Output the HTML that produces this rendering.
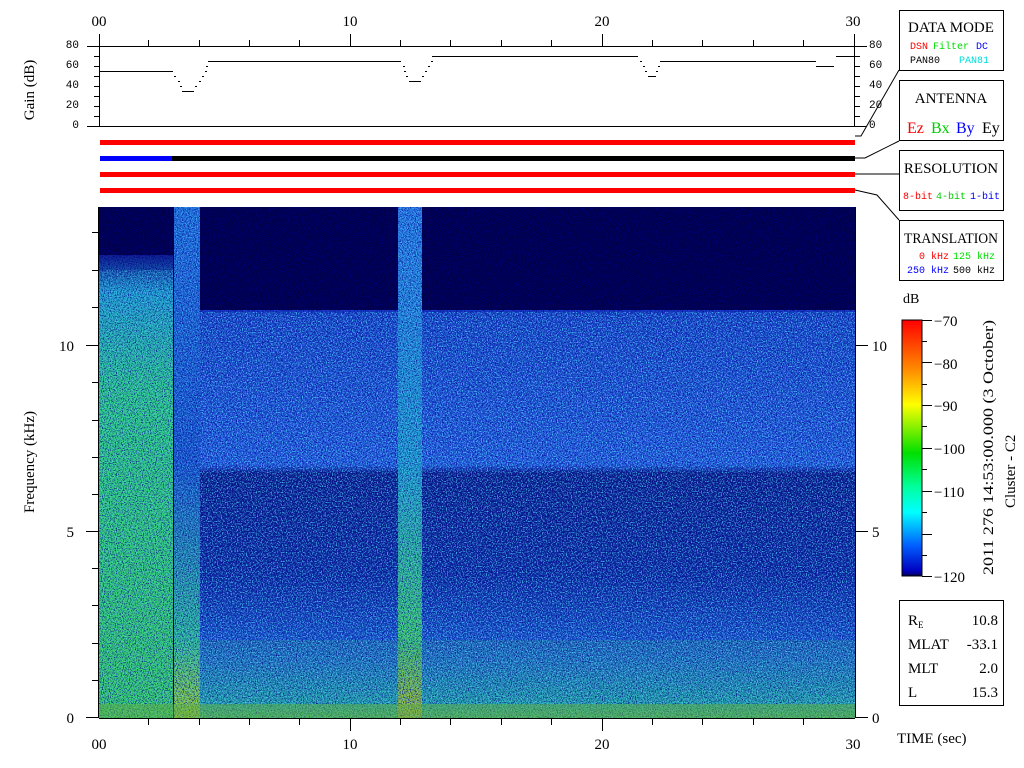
<!DOCTYPE html>
<html><head><meta charset="utf-8"><style>
html,body{margin:0;padding:0;background:#fff;width:1024px;height:768px;overflow:hidden}
text{font-family:"Liberation Serif",serif}
.m text{font-family:"Liberation Mono",monospace}
</style></head><body>
<svg width="1024" height="768" viewBox="0 0 1024 768" xmlns="http://www.w3.org/2000/svg">
<defs>
<linearGradient id="blue" x1="0" y1="0" x2="0" y2="1">
<stop offset="0" stop-color="#1840c8"/><stop offset="0.38" stop-color="#2458e0"/>
<stop offset="0.4" stop-color="#0a1888"/><stop offset="0.65" stop-color="#0c24a0"/>
<stop offset="0.85" stop-color="#1c5cd8"/><stop offset="0.97" stop-color="#20a8b0"/><stop offset="1" stop-color="#40c060"/>
</linearGradient>
<linearGradient id="left" x1="0" y1="0" x2="0" y2="1">
<stop offset="0" stop-color="#102090"/><stop offset="0.08" stop-color="#20a0d0"/>
<stop offset="0.3" stop-color="#30d080"/><stop offset="1" stop-color="#38d060"/>
</linearGradient>
<linearGradient id="band1" x1="0" y1="0" x2="0" y2="1">
<stop offset="0" stop-color="#2070e0"/><stop offset="0.5" stop-color="#1850d0"/><stop offset="0.85" stop-color="#30c090"/><stop offset="1" stop-color="#a0d020"/>
</linearGradient>
<linearGradient id="band2" x1="0" y1="0" x2="0" y2="1">
<stop offset="0" stop-color="#2878e8"/><stop offset="0.5" stop-color="#20a0d0"/><stop offset="0.85" stop-color="#40d060"/><stop offset="1" stop-color="#e0c000"/>
</linearGradient>
<linearGradient id="cb" x1="0" y1="0" x2="0" y2="1">
<stop offset="0" stop-color="#ff0000"/><stop offset="0.2" stop-color="#ff9000"/><stop offset="0.33" stop-color="#ffff00"/>
<stop offset="0.52" stop-color="#00e000"/><stop offset="0.65" stop-color="#00ff9a"/><stop offset="0.75" stop-color="#00ffff"/>
<stop offset="0.88" stop-color="#0060ff"/><stop offset="0.98" stop-color="#0000c0"/><stop offset="1" stop-color="#000050"/>
</linearGradient>
<filter id="noise" x="0" y="0" width="100%" height="100%">
<feTurbulence type="fractalNoise" baseFrequency="0.8" numOctaves="1" seed="3"/>
<feColorMatrix values="0 0 0 0 0.1  0 0 0 0 0.8  0 0 0 0 1  0 0 0 4 -1.9"/>
</filter>
<filter id="noise2" x="0" y="0" width="100%" height="100%">
<feTurbulence type="fractalNoise" baseFrequency="0.85" numOctaves="1" seed="9"/>
<feColorMatrix values="0 0 0 0 0  0 0 0 0 0  0 0 0 0 0.25  0 0 0 4 -1.8"/>
</filter>
</defs>

<g font-size="15" text-anchor="middle">
<text x="99" y="26">00</text><text x="350" y="26">10</text><text x="602" y="26">20</text><text x="853" y="26">30</text>
</g>
<g stroke="#000" stroke-width="1" fill="none">
<line x1="99" y1="46.5" x2="855" y2="46.5"/><line x1="87" y1="126.5" x2="867" y2="126.5"/>
<line x1="99.5" y1="34" x2="99.5" y2="126"/><line x1="854.5" y1="34" x2="854.5" y2="126"/>
<line x1="87" y1="46.5" x2="99" y2="46.5"/><line x1="855" y1="46.5" x2="867" y2="46.5"/>
<path d="M148.5 40v6M199.5 40v6M249.5 40v6M299.5 40v6M350.5 34v12M400.5 40v6M450.5 40v6M501.5 40v6M551.5 40v6M602.5 34v12M652.5 40v6M702.5 40v6M753.5 40v6M803.5 40v6"/>
<path d="M94 56.5h5M94 66.5h5M94 76.5h5M94 86.5h5M94 96.5h5M94 106.5h5M94 116.5h5M855 56.5h5M855 66.5h5M855 76.5h5M855 86.5h5M855 96.5h5M855 106.5h5M855 116.5h5"/>
<path d="M100 71.5H173 M182 91.5H194 M208 61.5H401 M409 81.5H421 M432 56.5H638 M648 76.5H656 M660 61.5H816 M816 66.5H834 M836 56.5H855"/>
<path d="M174 76.5h2M178 81.5h2M180 86.5h2M195 86.5h2M199 81.5h2M202 76.5h2M205 71.5h2M206 66.5h2M403 66.5h2M404 71.5h2M406 76.5h2M422 76.5h2M425 71.5h2M428 66.5h2M431 61.5h2M640 61.5h2M643 66.5h2M645 71.5h2M656 71.5h2M658 66.5h2"/>
</g>
<g class="m" font-size="11" text-anchor="end">
<text x="79" y="48">80</text><text x="79" y="68">60</text><text x="79" y="88">40</text><text x="79" y="108">20</text><text x="79" y="128">0</text>
</g>
<g class="m" font-size="11">
<text x="869" y="48">80</text><text x="869" y="68">60</text><text x="869" y="88">40</text><text x="869" y="108">20</text><text x="869" y="128">0</text>
</g>
<text transform="translate(34,90) rotate(-90)" font-size="15" text-anchor="middle">Gain (dB)</text>

<rect x="100" y="140" width="755" height="5" fill="#f00"/>
<rect x="100" y="156" width="72" height="5" fill="#00f"/><rect x="172" y="156" width="683" height="5" fill="#000"/>
<rect x="100" y="172" width="755" height="5" fill="#f00"/>
<rect x="100" y="188" width="755" height="5" fill="#f00"/>
<g stroke="#000" fill="none">
<path d="M899 70 L861 136 L855 136"/><path d="M899 141 L865 158 L855 158"/>
<path d="M899 174 L855 174"/><path d="M899 220 L877 195 L855 190"/>
</g>

<g fill="#fff" stroke="#000">
<rect x="899.5" y="10.5" width="104" height="60"/><rect x="899.5" y="80.5" width="104" height="60"/>
<rect x="899.5" y="150.5" width="104" height="60"/><rect x="899.5" y="220.5" width="104" height="60"/>
<rect x="899.5" y="600.5" width="104" height="105"/>
</g>
<g font-size="15" text-anchor="middle">
<text x="951" y="32">DATA MODE</text><text x="951" y="103">ANTENNA</text>
<text x="951" y="173">RESOLUTION</text><text x="951" y="243" textLength="94" lengthAdjust="spacingAndGlyphs">TRANSLATION</text>
</g>
<g class="m" font-size="10">
<text x="910" y="49" fill="#f00">DSN</text><text x="933" y="49" fill="#0d0">Filter</text><text x="976" y="49" fill="#00f">DC</text>
<text x="910" y="63">PAN80</text><text x="959" y="63" fill="#0dd">PAN81</text>
<text x="903" y="199" fill="#f00">8-bit</text><text x="936" y="199" fill="#0c0">4-bit</text><text x="970" y="199" fill="#00f">1-bit</text>
<text x="919" y="259" fill="#f00">0 kHz</text><text x="953" y="259" fill="#0d0">125 kHz</text>
<text x="907" y="273" fill="#00f">250 kHz</text><text x="953" y="273">500 kHz</text>
</g>
<g font-size="16">
<text x="907" y="133" fill="#f00">Ez</text><text x="931" y="133" fill="#0c0">Bx</text><text x="956" y="133" fill="#00f">By</text><text x="982" y="133">Ey</text>
</g>

<rect x="99" y="207" width="756" height="511" fill="#000048"/>
<rect x="200" y="310" width="655" height="408" fill="url(#blue)"/>
<rect x="99" y="255" width="74" height="463" fill="url(#left)"/>
<rect x="174" y="207" width="26" height="511" fill="url(#band1)"/>
<rect x="398" y="207" width="24" height="511" fill="url(#band2)"/>
<rect x="200" y="640" width="655" height="78" fill="#30a080" opacity="0.3"/>
<g opacity="0.8" filter="url(#noise2)"><rect x="99" y="207" width="756" height="511"/></g>
<rect x="99" y="270" width="74" height="448" filter="url(#noise)" opacity="0.6"/>
<rect x="174" y="207" width="26" height="511" filter="url(#noise)" opacity="0.6"/>
<rect x="398" y="207" width="24" height="511" filter="url(#noise)" opacity="0.6"/>
<rect x="200" y="312" width="198" height="406" filter="url(#noise)" opacity="0.75"/>
<rect x="422" y="312" width="433" height="406" filter="url(#noise)" opacity="0.75"/>
<rect x="99" y="704" width="756" height="14" fill="#60b040" opacity="0.5"/>
<g stroke="#000" fill="none">
<line x1="98.5" y1="207" x2="98.5" y2="718"/><line x1="855.5" y1="207" x2="855.5" y2="718"/>
<line x1="99" y1="718.5" x2="855" y2="718.5"/>
<path d="M86 345.5h12M86 531.5h12M86 717.5h12M856 345.5h12M856 531.5h12M856 717.5h12M92 232.5h6M92 270.5h6M92 307.5h6M92 382.5h6M92 420.5h6M92 457.5h6M92 494.5h6M92 568.5h6M92 605.5h6M92 643.5h6M92 680.5h6"/>
<path d="M148.5 719v6M199.5 719v6M249.5 719v6M299.5 719v6M350.5 719v12M400.5 719v6M450.5 719v6M501.5 719v6M551.5 719v6M602.5 719v12M652.5 719v6M702.5 719v6M753.5 719v6M803.5 719v6"/>
</g>
<g font-size="15">
<text x="74" y="351" text-anchor="end">10</text><text x="74" y="537" text-anchor="end">5</text><text x="74" y="723" text-anchor="end">0</text>
<text x="872" y="351">10</text><text x="872" y="537">5</text><text x="872" y="723">0</text>
</g>
<g font-size="15" text-anchor="middle">
<text x="99" y="749">00</text><text x="350" y="749">10</text><text x="602" y="749">20</text><text x="853" y="749">30</text>
</g>
<text transform="translate(34,462) rotate(-90)" font-size="15" text-anchor="middle">Frequency (kHz)</text>
<text x="897" y="743" font-size="15">TIME (sec)</text>

<text x="903" y="303" font-size="14">dB</text>
<rect x="902" y="320" width="20" height="256" fill="url(#cb)" stroke="#000"/>
<g stroke="#000"><path d="M922 320.5h10M922 362.5h10M922 405.5h10M922 448.5h10M922 491.5h10M922 534.5h10M922 576.5h10M922 341.5h5M922 384.5h5M922 426.5h5M922 469.5h5M922 512.5h5M922 555.5h5"/></g>
<g font-size="15">
<text x="934" y="326">−70</text><text x="934" y="369">−80</text><text x="934" y="411">−90</text>
<text x="934" y="454">−100</text><text x="934" y="497">−110</text><text x="934" y="582">−120</text>
</g>
<text transform="translate(993,575) rotate(-90)" font-size="15" textLength="255" lengthAdjust="spacingAndGlyphs">2011 276 14:53:00.000 (3 October)</text>
<text transform="translate(1015,508) rotate(-90)" font-size="15">Cluster - C2</text>

<g font-size="15">
<text x="908" y="625">R<tspan font-size="9" dy="3">E</tspan></text><text x="998" y="625" text-anchor="end">10.8</text>
<text x="908" y="649">MLAT</text><text x="998" y="649" text-anchor="end">-33.1</text>
<text x="908" y="673">MLT</text><text x="998" y="673" text-anchor="end">2.0</text>
<text x="908" y="697">L</text><text x="998" y="697" text-anchor="end">15.3</text>
</g>
</svg>
</body></html>
